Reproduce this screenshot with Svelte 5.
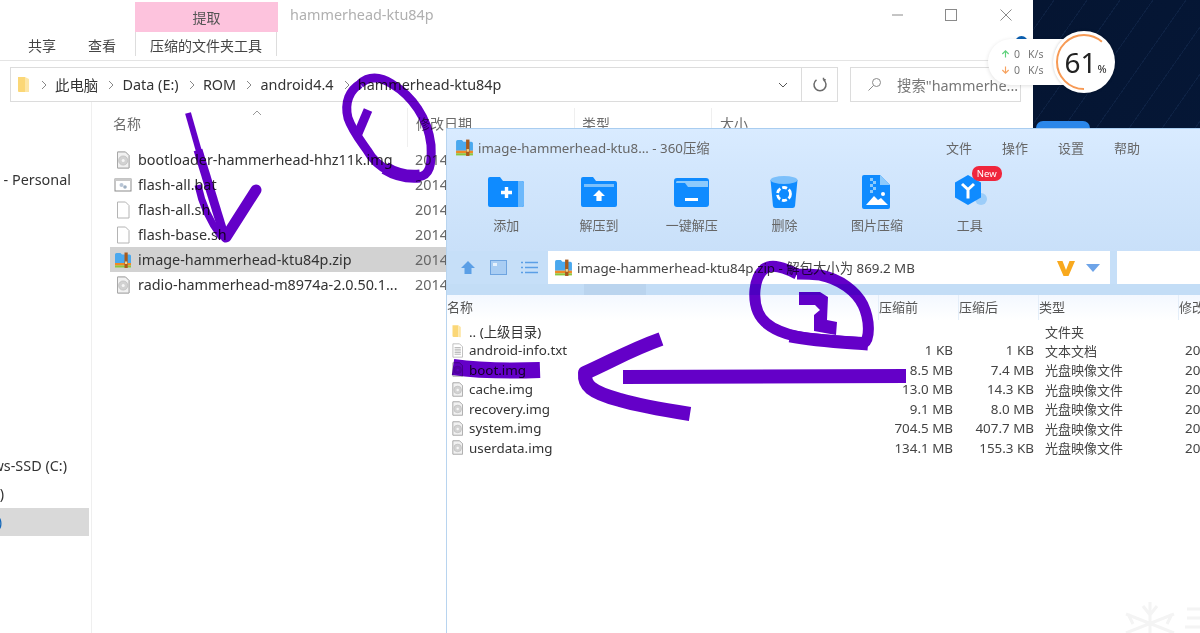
<script>
  const exFiles = [
    { name: 'bootloader-hammerhead-hhz11k.img', icon: 'disc' },
    { name: 'flash-all.bat', icon: 'bat' },
    { name: 'flash-all.sh', icon: 'page' },
    { name: 'flash-base.sh', icon: 'page' },
    { name: 'image-hammerhead-ktu84p.zip', icon: 'zip', selected: true },
    { name: 'radio-hammerhead-m8974a-2.0.50.1...', icon: 'disc' }
  ];
  const crumbs = ['此电脑', 'Data (E:)', 'ROM', 'android4.4', 'hammerhead-ktu84p'];
  const zipFiles = [
    { name: '.. (上级目录)', icon: 'folder', orig: '', comp: '', type: '文件夹', date: '' },
    { name: 'android-info.txt', icon: 'txt', orig: '1 KB', comp: '1 KB', type: '文本文档', date: '2014' },
    { name: 'boot.img', icon: 'disc', orig: '8.5 MB', comp: '7.4 MB', type: '光盘映像文件', date: '2014' },
    { name: 'cache.img', icon: 'disc', orig: '13.0 MB', comp: '14.3 KB', type: '光盘映像文件', date: '2014' },
    { name: 'recovery.img', icon: 'disc', orig: '9.1 MB', comp: '8.0 MB', type: '光盘映像文件', date: '2014' },
    { name: 'system.img', icon: 'disc', orig: '704.5 MB', comp: '407.7 MB', type: '光盘映像文件', date: '2014' },
    { name: 'userdata.img', icon: 'disc', orig: '134.1 MB', comp: '155.3 KB', type: '光盘映像文件', date: '2014' }
  ];
  const tools = ['add', 'extract', 'oneclick', 'trash', 'image', 'tool'];
  const toolLabels = { add: '添加', extract: '解压到', oneclick: '一键解压', trash: '删除', image: '图片压缩', tool: '工具' };
</script>

{#snippet fileIcon(kind, size)}
  <svg width={size} height={size} viewBox="0 0 18 18" class="ficon">
    {#if kind === 'zip'}
      <path d="M1 3.500 a1.500 1.500 0 0 1 1.500-1.500 h4 l1.500 1.500 h7.500 a1.500 1.500 0 0 1 1.500 1.500 v7 H1z" fill="#4aa8ee"/>
      <rect x="1" y="12" width="16" height="2.500" fill="#f08a24"/>
      <rect x="1" y="14.500" width="16" height="2" fill="#8cc63f"/>
      <rect x="10.500" y="1.500" width="3.200" height="15.500" fill="#a85a1c"/>
      <rect x="11" y="10.500" width="2.200" height="2.500" fill="#f6d58a"/>
    {:else if kind === 'folder'}
      <path d="M3 1.500 h7 v14 H4.500 q-1.500 0-1.500-1.500z" fill="#fbd777"/>
      <path d="M10 1.500 l3 2 v12.500 l-3-.5z" fill="#fde6a6"/>
    {:else if kind === 'bat'}
      <rect x="1" y="3" width="16" height="12" fill="#fff" stroke="#8b8b8b"/>
      <rect x="1" y="3" width="16" height="2" fill="#c9c9c9"/>
      <circle cx="7.500" cy="9" r="2" fill="#b9c6d6"/>
      <circle cx="11" cy="11" r="1.800" fill="#9fb0c2"/>
    {:else}
      <path d="M3.500 1 h8 l3.500 3.500 V17 h-11.500z" fill="#fff" stroke="#b4b4b4"/>
      {#if kind === 'disc'}
        <path d="M3.500 1 h8 l3.500 3.500 V17 h-11.500z" fill="#f1f1f1" stroke="#a8a8a8"/>
        <circle cx="9.200" cy="9.500" r="4.600" fill="#d2d2d2" stroke="#b5b5b5" stroke-width=".6"/>
        <circle cx="9.200" cy="9.500" r="1.500" fill="#f6f6f6"/>
      {:else if kind === 'txt'}
        <path d="M5.500 5.500h7.500M5.500 7.500h7.500M5.500 9.500h7.500M5.500 11.500h7.500M5.500 13.500h7.500" stroke="#a9a9a9" stroke-width="1"/>
      {/if}
    {/if}
  </svg>
{/snippet}

{#snippet toolIcon(id)}
  <svg width="44" height="40" viewBox="0 0 44 40">
    {#if id === 'add'}
      <path d="M4 6 a2 2 0 0 1 2-2 h10 l3 4 h19 a2 2 0 0 1 2 2 v22 a2 2 0 0 1-2 2 H6 a2 2 0 0 1-2-2z" fill="#0f8bff"/>
      <path d="M34 8 h4 a2 2 0 0 1 2 2 v22 a2 2 0 0 1-2 2 h-4z" fill="#6cb8fb"/>
      <path d="M17 19.500h11M22.500 14v11" stroke="#fff" stroke-width="3.400"/>
    {:else if id === 'extract'}
      <path d="M4 6 a2 2 0 0 1 2-2 h10 l3 4 h19 a2 2 0 0 1 2 2 v22 a2 2 0 0 1-2 2 H6 a2 2 0 0 1-2-2z" fill="#0f8bff"/>
      <rect x="7" y="11" width="30" height="3" fill="#7cc0fb"/>
      <path d="M22 17 l6 6 h-3.400 v5 h-5.200 v-5 H16z" fill="#fff"/>
    {:else if id === 'oneclick'}
      <path d="M4 8 a3 3 0 0 1 3-3 h29 a3 3 0 0 1 3 3 v23 a3 3 0 0 1-3 3 H7 a3 3 0 0 1-3-3z" fill="#0f8bff"/>
      <path d="M6 10 h9 l3 4 h20 V8 H7 Q6 8 6 10z" fill="#8ccafc"/>
      <rect x="15" y="25" width="13" height="3" fill="#fff"/>
    {:else if id === 'trash'}
      <path d="M8.500 7 L11 33 q.3 2 2.500 2 h17 q2.200 0 2.500-2 L35.500 7z" fill="#0f8bff"/>
      <ellipse cx="22" cy="7" rx="13.500" ry="4" fill="#7cc0fb"/>
      <circle cx="22" cy="21" r="6.500" fill="none" stroke="#fff" stroke-width="2.800" stroke-dasharray="5 2"/>
    {:else if id === 'image'}
      <path d="M9 2 a2 2 0 0 0-2 2 v30 a2 2 0 0 0 2 2 h24 a2 2 0 0 0 2-2 V12 L25 2z" fill="#0f8bff"/>
      <path d="M25 2 l10 10 h-10z" fill="#8ccafc"/>
      <path d="M15 5h3v3h-3zM18 8h3v3h-3zM15 11h3v3h-3zM18 14h3v3h-3zM15 17h3v3h-3z" fill="#8ccafc"/>
      <path d="M11 32 l8-9 4 4 3-2 7 7z" fill="#fff"/>
      <circle cx="28" cy="21" r="2" fill="#fff"/>
    {:else}
      <circle cx="33" cy="26" r="6" fill="#9ccdf9"/>
      <path d="M20 2 l13 7.500 v15 l-13 7.500 -13-7.500 v-15z" fill="#0f8bff"/>
      <path d="M14 11 l6 5.500 6-5.500 M20 16.500 v9" stroke="#fff" stroke-width="3" fill="none"/>
    {/if}
  </svg>
{/snippet}

<div class="desktop">
  <section class="explorer">
    <header class="ribbon">
      <div class="tabs">
        <span class="tab share">共享</span>
        <span class="tab">查看</span>
        <div class="tool-group">
          <div class="pink">提取</div>
          <div class="tool-tab">压缩的文件夹工具</div>
        </div>
      </div>
      <div class="win-title">hammerhead-ktu84p</div>
      <div class="controls">
        <svg width="54" height="30" viewBox="0 0 54 30"><path d="M21 15h11" stroke="#8a8a8a"/></svg>
        <svg width="54" height="30" viewBox="0 0 54 30"><rect x="20.500" y="9.500" width="11" height="11" fill="none" stroke="#8a8a8a"/></svg>
        <svg width="54" height="30" viewBox="0 0 54 30"><path d="M21.500 9.500l11 11M32.500 9.500l-11 11" stroke="#8a8a8a"/></svg>
      </div>
    </header>

    <div class="address-row">
      <div class="address">
        <svg width="14" height="18" viewBox="0 0 14 18" class="crumb-folder"><path d="M2 1h7v15H3q-1 0-1-1z" fill="#fbd777"/><path d="M9 1l4 2v13H9z" fill="#fde6a6"/></svg>
        {#each crumbs as c}
          <svg width="8" height="10" viewBox="0 0 8 10" class="chev"><path d="M2 1l4 4-4 4" fill="none" stroke="#888"/></svg>
          <span class="crumb">{c}</span>
        {/each}
        <svg width="10" height="6" viewBox="0 0 10 6" class="drop"><path d="M1 1l4 4 4-4" fill="none" stroke="#555"/></svg>
      </div>
      <div class="refresh">
        <svg width="16" height="16" viewBox="0 0 16 16"><path d="M11.500 2.800a6 6 0 1 1-7 0M11.500 2.800V.8M11.500 2.800h2.200" fill="none" stroke="#6a6a6a" stroke-width="1.500"/></svg>
      </div>
      <div class="search">
        <svg width="15" height="15" viewBox="0 0 15 15"><circle cx="9.500" cy="5.500" r="4" fill="none" stroke="#8a8a8a"/><path d="M6.500 8.500L1.500 13.500" stroke="#8a8a8a"/></svg>
        <span>搜索"hammerhe...</span>
      </div>
    </div>

    <div class="body">
      <nav class="sidebar">
        <div class="side-item personal">OneDrive - Personal</div>
        <div class="side-item ssd">Windows-SSD (C:)</div>
        <div class="side-item paren">Data (D:)</div>
        <div class="side-item active">Data (E:)</div>
      </nav>
      <div class="main">
        <div class="ex-head">
          <span class="h-name">名称<svg width="10" height="6" viewBox="0 0 10 6" class="sort"><path d="M1 5l4-4 4 4" fill="none" stroke="#999"/></svg></span>
          <span class="h-date">修改日期</span>
          <span class="h-type">类型</span>
          <span class="h-size">大小</span>
        </div>
        <div class="ex-list">
          {#each exFiles as f}
            <div class="ex-row" class:selected={f.selected}>
              <span class="ex-name">{@render fileIcon(f.icon, 18)}<span>{f.name}</span></span>
              <span class="ex-date">2014/6/12 18:29</span>
            </div>
          {/each}
        </div>
      </div>
    </div>
  </section>

  <div class="blue-btn"></div>

  <aside class="speed">
    <span class="blob"></span>
    <div class="rates">
      <div class="rate"><svg width="9" height="10" viewBox="0 0 10 10"><path d="M5 9V1.500M1.500 5L5 1.500 8.500 5" fill="none" stroke="#5fd17c" stroke-width="1.300"/></svg><span>0</span><span class="unit">K/s</span></div>
      <div class="rate"><svg width="9" height="10" viewBox="0 0 10 10"><path d="M5 1v7.500M1.500 5L5 8.500 8.500 5" fill="none" stroke="#f7a25e" stroke-width="1.300"/></svg><span>0</span><span class="unit">K/s</span></div>
    </div>
    <div class="gauge">
      <svg width="62" height="62" viewBox="0 0 62 62" class="arc"><circle cx="31" cy="31" r="27" fill="none" stroke="#f79a55" stroke-width="2" stroke-dasharray="104 170" transform="rotate(90 31 31)"/></svg>
      <span class="pct">61</span><span class="pct-sign">%</span>
    </div>
  </aside>

  <section class="zip">
    <div class="zip-title">
      {@render fileIcon('zip', 19)}
      <span class="zip-name">image-hammerhead-ktu8... - 360压缩</span>
      <nav class="menu"><span>文件</span><span>操作</span><span>设置</span><span>帮助</span></nav>
    </div>
    <div class="toolbar">
      {#each tools as t}
        <div class="tool">
          <div class="tool-icon">
            {@render toolIcon(t)}
            {#if t === 'tool'}<span class="badge">New</span>{/if}
          </div>
          <span>{toolLabels[t]}</span>
        </div>
      {/each}
    </div>
    <div class="zip-addr">
      <div class="nav-icons">
        <svg width="16" height="15" viewBox="0 0 16 15"><path d="M8 1l7 7h-3.500v6h-7V8H1z" fill="#5b9fe6"/></svg>
        <svg width="17" height="15" viewBox="0 0 17 15"><rect x=".5" y=".5" width="16" height="14" fill="#a9cdf3" stroke="#6ea4e0"/><rect x="3" y="3" width="4" height="3" fill="#e6f1fc"/></svg>
        <svg width="17" height="13" viewBox="0 0 17 13"><path d="M0 1.500h2M4 1.500h13M0 6.500h2M4 6.500h13M0 11.500h2M4 11.500h13" stroke="#5b9fe6" stroke-width="1.600"/></svg>
      </div>
      <div class="zip-path">
        {@render fileIcon('zip', 19)}
        <span class="zip-path-text">image-hammerhead-ktu84p.zip - 解包大小为 869.2 MB</span>
        <svg width="20" height="18" viewBox="0 0 20 18"><path d="M1 2h5.500l3.500 9 3.500-9H19l-6.500 15h-5z" fill="#f8a91e"/></svg>
        <svg width="14" height="8" viewBox="0 0 14 8" class="path-drop"><path d="M0 0h14L7 8z" fill="#6ea4e8"/></svg>
      </div>
      <div class="zip-search"></div>
    </div>
    <div class="scroll-band"><div class="scroll-thumb"></div></div>
    <div class="zip-head">
      <span class="first">名称</span><span class="sep">压缩前</span><span class="sep">压缩后</span><span class="sep">类型</span><span class="sep">修改</span>
    </div>
    <div class="zip-list">
      {#each zipFiles as f}
        <div class="zip-row">
          <span class="zip-fname">{@render fileIcon(f.icon, 15)}<span>{f.name}</span></span>
          <span class="num">{f.orig}</span>
          <span class="num">{f.comp}</span>
          <span class="ztype">{f.type}</span>
          <span class="zdate">{f.date}</span>
        </div>
      {/each}
    </div>
  </section>

  <svg class="ink" width="1200" height="633" viewBox="0 0 1200 633">
    <g fill="none" stroke="#6400c8" stroke-linejoin="round">
      <path stroke-width="9" d="M360 84 C350 90 344 102 348 118 C352 130 360 140 367 150 C378 170 400 178 418 177 C430 176 432 165 431 145 C428 118 412 96 392 84 C380 76 368 76 360 84"/>
      <path stroke-width="13" d="M385 168 C398 176 410 177 420 176"/>
      <path stroke-width="9" stroke-linecap="butt" d="M368 110 L357 136"/>
      <path stroke-width="6" stroke-linecap="butt" d="M188 113 L200 155"/>
      <path stroke-width="9" stroke-linecap="butt" d="M198 150 L225 238"/>
      <path stroke-width="7" stroke-linecap="butt" d="M198 185 C202 205 210 222 222 238"/>
      <path stroke-width="11" stroke-linecap="round" d="M256 190 L226 237"/>
      <path stroke-width="11" d="M797 274 C785 268 772 263 764 269 C753 279 753 300 758 312 C765 329 790 337 815 339 L864 343 C870 339 870 320 863 305 C856 291 840 279 820 275 C810 274 805 274 797 274"/>
      <path stroke-width="13" stroke-linecap="butt" d="M790 336 C815 341 840 342 868 344"/>
      <path d="M799 292 H820 L828 297 L827 320 L837 322 L836 335 L814 331 V315 L820 310 L815 305 H799Z" fill="#6400c8" stroke="none"/>
      <path stroke-width="14" stroke-linecap="butt" d="M623 377 L906 376"/>
      <path stroke-width="14" stroke-linecap="butt" d="M661 339 C630 350 610 362 585 373 C584 385 590 392 620 400 C640 406 665 410 690 414"/>
      <path stroke-width="16" stroke-linecap="butt" d="M453 367 C480 371 510 371 540 370"/>
    </g>
  </svg>

  <svg class="flake" width="77" height="31" viewBox="0 0 77 31">
    <g stroke="#f4f4f4" stroke-width="3" fill="none">
      <path d="M27 0V31M3 12L51 31M3 31L51 12M20 4l7 9 7-9M10 22l-5-10M44 22l5-10"/>
      <path d="M64 7h13M64 16h13M62 25h15"/>
    </g>
  </svg>
</div>

<style>
  :global(body) {
    margin: 0;
    overflow: hidden;
  }

  .desktop {
    position: relative;
    width: 1200px;
    height: 633px;
    overflow: hidden;
    background:
      repeating-linear-gradient(125deg, transparent 0 26px, rgba(70, 110, 170, 0.12) 26px 27px),
      linear-gradient(120deg, #020d22, #06193a);
    font-family: 'Noto Sans', 'Noto Sans CJK SC', sans-serif;
    font-size: 14.400px;
    color: #333;
    filter: blur(0.35px);
  }

  .ficon {
    flex: none;
  }

  /* explorer window */
  .explorer {
    position: absolute;
    left: 0;
    top: 0;
    width: 1033px;
    height: 633px;
    background: #fff;
    display: flex;
    flex-direction: column;
  }

  .ribbon {
    height: 61px;
    display: flex;
    border-bottom: 1px solid #e4e4e4;
    box-sizing: border-box;
    flex: none;
  }

  .tabs {
    display: flex;
    align-items: flex-end;
    padding-left: 28px;
    font-size: 14px;
  }

  .tab {
    width: 60px;
    height: 24px;
    line-height: 24px;
    margin-bottom: 2px;
    color: #444;
  }

  .tab + .tab {
    width: 47px;
  }

  .tool-group {
    width: 143px;
    align-self: flex-start;
    margin-top: 2px;
  }

  .pink {
    height: 30px;
    line-height: 32px;
    background: #fdc3dd;
    text-align: center;
    color: #555;
  }

  .tool-tab {
    width: 142px;
    height: 24px;
    line-height: 27px;
    box-sizing: border-box;
    text-align: center;
    color: #444;
    border-left: 1px solid #ddd;
    border-right: 1px solid #ddd;
  }

  .win-title {
    margin: 5px 0 0 12px;
    color: #b0b0b0;
    flex: 1;
  }

  .controls {
    display: flex;
    height: 30px;
    flex: none;
  }

  .address-row {
    display: flex;
    padding: 6px 12px 0 10px;
    flex: none;
  }

  .address {
    width: 792px;
    height: 35px;
    box-sizing: border-box;
    border: 1px solid #dcdcdc;
    display: flex;
    align-items: center;
    padding-left: 5px;
    color: #333;
  }

  .crumb-folder {
    margin-right: 10px;
  }

  .chev {
    margin-right: 7px;
  }

  .crumb {
    margin-right: 9.300px;
  }

  .drop {
    margin-left: auto;
    margin-right: 13px;
  }

  .refresh {
    width: 36px;
    height: 35px;
    box-sizing: border-box;
    border: 1px solid #dcdcdc;
    border-left: none;
    display: flex;
    align-items: center;
    justify-content: center;
  }

  .search {
    margin-left: 12px;
    width: 171px;
    height: 35px;
    box-sizing: border-box;
    border: 1px solid #dcdcdc;
    display: flex;
    align-items: center;
    gap: 15px;
    padding-left: 16px;
    color: #777;
    white-space: nowrap;
    overflow: hidden;
  }

  .body {
    flex: 1;
    display: flex;
    min-height: 0;
  }

  .sidebar {
    width: 92px;
    box-sizing: border-box;
    border-right: 1px solid #efefef;
    flex: none;
    overflow: hidden;
    padding-top: 64px;
  }

  .side-item {
    height: 28px;
    line-height: 28px;
    white-space: nowrap;
    display: flex;
    justify-content: flex-end;
    color: #333;
    margin-right: 2px;
  }

  .personal {
    padding-right: 18px;
  }

  .ssd {
    margin-top: 258px;
    padding-right: 22px;
  }

  .paren {
    padding-right: 85px;
  }

  .active {
    background: #d9d9d9;
    padding-right: 87px;
    color: #1467b8;
  }

  .main {
    flex: 1;
    min-width: 0;
    padding-left: 18px;
  }

  .ex-head {
    height: 45px;
    display: flex;
    margin-left: -18px;
    color: #6d6d6d;
    font-size: 14px;
  }

  .ex-head span {
    position: relative;
    height: 39px;
    margin-top: 6px;
    line-height: 32px;
    box-sizing: border-box;
    border-right: 1px solid #efefef;
  }

  .ex-head .h-name {
    width: 316px;
    padding-left: 21px;
  }

  .sort {
    position: absolute;
    left: 160px;
    top: 2px;
  }

  .ex-head .h-date {
    width: 167px;
    padding-left: 8px;
  }

  .ex-head .h-type {
    width: 137px;
    padding-left: 7px;
  }

  .ex-head .h-size {
    padding-left: 8px;
    border-right: none;
  }

  .ex-list {
    display: flex;
    flex-direction: column;
  }

  .ex-row {
    height: 25px;
    display: flex;
    align-items: center;
    white-space: nowrap;
  }

  .ex-row.selected {
    background: #d2d2d2;
  }

  .ex-name {
    width: 305px;
    display: flex;
    align-items: center;
    gap: 6px;
    padding-left: 4px;
    box-sizing: border-box;
  }

  .ex-date {
    color: #666;
  }

  .blue-btn {
    position: absolute;
    left: 1036px;
    top: 121px;
    width: 54px;
    height: 20px;
    border-radius: 7px;
    background: #2b87ea;
  }

  /* speed widget */
  .speed {
    position: absolute;
    left: 988px;
    top: 31px;
    width: 127px;
    height: 62px;
    display: flex;
    align-items: center;
  }

  .blob {
    position: absolute;
    left: 27px;
    top: 5px;
    width: 13px;
    height: 13px;
    border-radius: 50%;
    background: #0b5fb0;
  }

  .rates {
    position: relative;
    width: 90px;
    height: 46px;
    margin-right: -25px;
    background: #fff;
    border-radius: 23px 0 0 23px;
    box-shadow: 0 1px 4px rgba(0, 0, 0, 0.12);
    padding: 7px 0 0 13px;
    box-sizing: border-box;
    flex: none;
    font-size: 10.500px;
    color: #777;
  }

  .rate {
    display: flex;
    align-items: center;
    gap: 4px;
    height: 16px;
  }

  .unit {
    margin-left: 4px;
  }

  .gauge {
    position: relative;
    width: 62px;
    height: 62px;
    border-radius: 50%;
    background: #fff;
    box-shadow: 0 0 3px rgba(0, 0, 0, 0.2);
    flex: none;
    display: flex;
    align-items: baseline;
    justify-content: center;
    line-height: 62px;
    color: #222;
  }

  .arc {
    position: absolute;
    left: 0;
    top: 0;
  }

  .pct {
    font-size: 28px;
    margin-left: 3px;
  }

  .pct-sign {
    font-size: 11px;
    margin-left: 1px;
  }

  /* 360 window */
  .zip {
    position: absolute;
    left: 446px;
    top: 128px;
    width: 754px;
    height: 505px;
    box-sizing: border-box;
    border-top: 1px solid #a9cdf0;
    border-left: 1px solid #b8d4ef;
    background: #fff;
    display: flex;
    flex-direction: column;
    font-size: 13px;
    color: #666;
  }

  .zip-title {
    height: 37px;
    display: flex;
    align-items: center;
    padding-left: 8px;
    background: linear-gradient(#d9ebff, #d3e7fd);
    flex: none;
  }

  .zip-name {
    margin-left: 4px;
    flex: 1;
    color: #666;
    font-size: 13.300px;
  }

  .menu {
    display: flex;
    gap: 30px;
    padding-right: 60px;
  }

  .toolbar {
    height: 85px;
    display: flex;
    padding-left: 13px;
    background: linear-gradient(#d3e7fd, #c9e0f9);
    flex: none;
  }

  .tool {
    width: 92.700px;
    display: flex;
    flex-direction: column;
    align-items: center;
    padding-top: 7px;
    box-sizing: border-box;
    gap: 2px;
  }

  .tool-icon {
    position: relative;
    height: 40px;
  }

  .badge {
    position: absolute;
    left: 24px;
    top: -7px;
    width: 30px;
    height: 15px;
    line-height: 15px;
    border-radius: 7px;
    background: #f0263c;
    color: #fff;
    font-size: 9.500px;
    text-align: center;
  }

  .zip-addr {
    height: 33px;
    display: flex;
    background: #c6dff8;
    flex: none;
  }

  .nav-icons {
    width: 101px;
    display: flex;
    align-items: center;
    gap: 14px;
    padding-left: 13px;
    box-sizing: border-box;
  }

  .zip-path {
    width: 562px;
    background: #fff;
    display: flex;
    align-items: center;
    padding: 0 10px 0 6px;
    box-sizing: border-box;
    color: #444;
  }

  .zip-path-text {
    margin-left: 4px;
    flex: 1;
    font-size: 13.350px;
  }

  .path-drop {
    margin-left: 10px;
  }

  .zip-search {
    flex: 1;
    background: #fff;
    margin-left: 7px;
  }

  .scroll-band {
    height: 11px;
    background: #c3ddf6;
    flex: none;
    padding-left: 137px;
  }

  .scroll-thumb {
    width: 62px;
    height: 100%;
    background: #bad4ee;
  }

  .zip-head {
    height: 25px;
    display: grid;
    grid-template-columns: 431px 80px 80px 140px 1fr;
    background: linear-gradient(#f3f8ff, #fff);
    color: #555;
    white-space: nowrap;
    line-height: 25px;
    flex: none;
  }

  .zip-head .sep {
    border-left: 1px solid #e4eef9;
  }

  .zip-list {
    padding-top: 1px;
    display: flex;
    flex-direction: column;
    color: #444;
    font-size: 13.400px;
  }

  .zip-row {
    height: 19.500px;
    display: grid;
    grid-template-columns: 432px 74px 81px 145px 1fr;
    align-items: center;
    white-space: nowrap;
  }

  .zip-fname {
    display: flex;
    align-items: center;
    gap: 4px;
    padding-left: 3px;
    color: #333;
  }

  .num {
    text-align: right;
  }

  .ztype {
    padding-left: 11px;
    font-size: 13px;
  }

  .zdate {
    overflow: hidden;
    padding-left: 6px;
  }

  .ink {
    position: absolute;
    left: 0;
    top: 0;
    pointer-events: none;
    mix-blend-mode: multiply;
  }

  .flake {
    position: absolute;
    left: 1123px;
    top: 602px;
  }
</style>
